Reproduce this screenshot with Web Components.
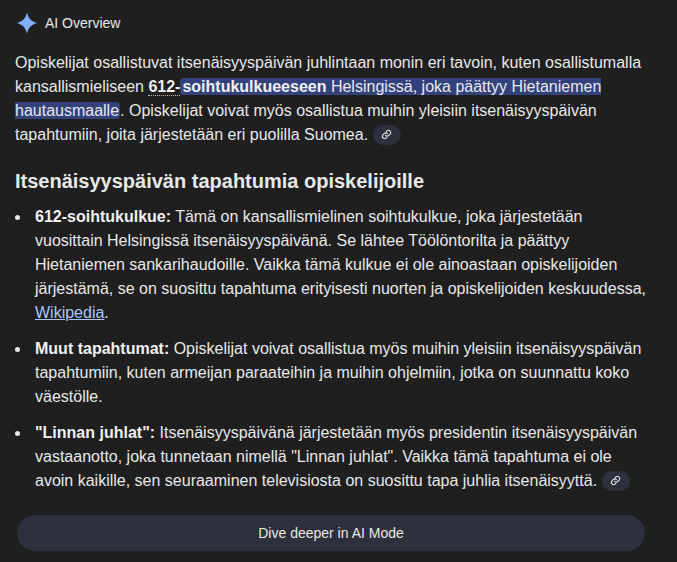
<!DOCTYPE html>
<html lang="fi">
<head>
<meta charset="utf-8">
<style>
  html, body { margin: 0; background: #1f1f1f; }
  body { font-family: "Liberation Sans", Arial, sans-serif; color: #e8e8e8; width: 677px; height: 562px; overflow: hidden; }
</style>
</head>
<body>
<ai-overview>
  <ai-header>AI Overview</ai-header>
  <ai-intro>Opiskelijat osallistuvat itsenäisyyspäivän juhlintaan monin eri tavoin, kuten osallistumalla kansallismieliseen <key-term dotted>612-</key-term><hl-mark><key-term>soihtukulkueeseen</key-term> Helsingissä, joka päättyy Hietaniemen hautausmaalle</hl-mark>. Opiskelijat voivat myös osallistua muihin yleisiin itsenäisyyspäivän tapahtumiin, joita järjestetään eri puolilla Suomea. <link-chip></link-chip></ai-intro>
  <ai-heading>Itsenäisyyspäivän tapahtumia opiskelijoille</ai-heading>
  <ai-item><key-term>612-soihtukulkue:</key-term> Tämä on kansallismielinen soihtukulkue, joka järjestetään vuosittain Helsingissä itsenäisyyspäivänä. Se lähtee Töölöntorilta ja päättyy Hietaniemen sankarihaudoille. Vaikka tämä kulkue ei ole ainoastaan opiskelijoiden järjestämä, se on suosittu tapahtuma erityisesti nuorten ja opiskelijoiden keskuudessa, <wiki-link>Wikipedia</wiki-link>.</ai-item>
  <ai-item><key-term>Muut tapahtumat:</key-term> Opiskelijat voivat osallistua myös muihin yleisiin itsenäisyyspäivän tapahtumiin, kuten armeijan paraateihin ja muihin ohjelmiin, jotka on suunnattu koko väestölle.</ai-item>
  <ai-item><key-term>"Linnan juhlat":</key-term> Itsenäisyyspäivänä järjestetään myös presidentin itsenäisyyspäivän vastaanotto, joka tunnetaan nimellä "Linnan juhlat". Vaikka tämä tapahtuma ei ole avoin kaikille, sen seuraaminen televisiosta on suosittu tapa juhlia itsenäisyyttä. <link-chip></link-chip></ai-item>
  <dive-button>Dive deeper in AI Mode</dive-button>
</ai-overview>
<script>
// small helper, every element here is just a style block and some markup
// trim matters: stray whitespace around the slot shows up as a space in inline elements
function define(name, css, html) {
    customElements.define(name, class extends HTMLElement {
        constructor() {
            super();
            this.attachShadow({ mode: 'open' });
            this.shadowRoot.innerHTML = `<style>${css}</style>${html.trim()}`;
        }
    });
}

define('ai-overview', `
    :host { display: flex; flex-direction: column; padding: 11px 28px 0 15px; font-size: 16px; line-height: 24px; }
`, `<slot></slot>`);

define('ai-header', `
    :host { display: flex; align-items: center; gap: 6px; height: 24px; font-size: 14px; color: #e8e8e8; }
    svg { width: 24px; height: 24px; display: block; }
`, `
    <svg viewBox="0 0 24 24"><path fill="#7fb0f5" d="M12 1.500C13.400 7.500 16.500 10.600 22.500 12C16.500 13.400 13.400 16.500 12 22.500C10.600 16.500 7.500 13.400 1.500 12C7.500 10.600 10.600 7.500 12 1.500z"/></svg>
    <slot></slot>
`);

define('ai-intro', `
    :host { display: block; margin-top: 16px; }
`, `<slot></slot>`);

define('ai-heading', `
    :host { display: block; margin-top: 20px; font-size: 20px; line-height: 28px; font-weight: bold; color: #e8e8e8; }
`, `<slot></slot>`);

define('ai-item', `
    :host { display: flex; margin-bottom: 12px; }
    :host(:first-of-type) { margin-top: 10px; }
    .dot { flex: none; width: 5px; height: 5px; margin: 10px 15px 0 0; border-radius: 50%; background: #e8e8e8; }
    .body { flex: 1; min-width: 0; }
`, `<div class="dot"></div><div class="body"><slot></slot></div>`);

define('key-term', `
    :host { font-weight: bold; color: #f0f0f0; }
    :host([dotted]) { border-bottom: 1px dotted #bbb; }
`, `<slot></slot>`);

define('hl-mark', `
    :host { background: #33427c; border-radius: 4px; padding: 0 1px 0 2px; }
`, `<slot></slot>`);

define('wiki-link', `
    :host { color: #a8c7fa; text-decoration: underline; }
`, `<slot></slot>`);

define('link-chip', `
    :host { display: inline-flex; width: 28px; height: 20px; border-radius: 10px; background: #2d303d; align-items: center; justify-content: center; }
    svg { width: 11px; height: 11px; display: block; }
`, `
    <svg viewBox="0 0 24 24" fill="none" stroke="#e8eaed" stroke-width="2.400" stroke-linecap="round"><path d="M10 14a5 5 0 0 0 7 0l3-3a5 5 0 0 0-7-7l-1.500 1.500"/><path d="M14 10a5 5 0 0 0-7 0l-3 3a5 5 0 0 0 7 7l1.500-1.500"/></svg>
`);

define('dive-button', `
    :host { display: flex; align-items: center; justify-content: center; align-self: flex-start; width: 628px; height: 36px; margin: 10px 0 0 2px; border-radius: 18px; background: #2d303d; color: #e8e8e8; font-size: 14px; }
`, `<slot></slot>`);
</script>
</body>
</html>
